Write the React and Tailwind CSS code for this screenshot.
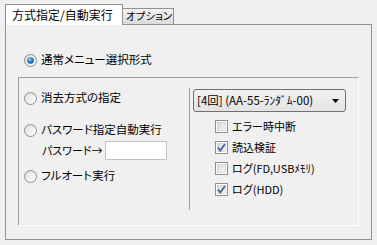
import React from 'react';

const font = "font-['Noto_Sans_CJK_JP','Noto_Sans',sans-serif] [font-feature-settings:'palt']";

const Radio = ({ checked }) => (
    <svg width="13" height="13" viewBox="0 0 13 13" className="shrink-0">
        <defs>
            <linearGradient id="rbg" x1="0" y1="0" x2="1" y2="1">
                <stop offset="0" stopColor="#dcdcdc" />
                <stop offset="1" stopColor="#ffffff" />
            </linearGradient>
            <radialGradient id="rdot" cx="0.4" cy="0.35" r="0.7">
                <stop offset="0" stopColor="#9fd8ff" />
                <stop offset="0.5" stopColor="#2a7fd0" />
                <stop offset="1" stopColor="#0d3f80" />
            </radialGradient>
        </defs>
        <circle cx="6.5" cy="6.5" r="6" fill="url(#rbg)" stroke="#8b8d90" />
        {checked && <circle cx="6.5" cy="6.5" r="3.3" fill="url(#rdot)" />}
    </svg>
);

const Check = ({ checked }) => (
    <svg width="13" height="13" viewBox="0 0 13 13" className="shrink-0">
        <defs>
            <linearGradient id="cbg" x1="0" y1="0" x2="1" y2="1">
                <stop offset="0" stopColor="#d8d8d8" />
                <stop offset="1" stopColor="#f8f8f8" />
            </linearGradient>
        </defs>
        <rect x="0.5" y="0.5" width="12" height="12" fill="#ffffff" stroke="#8e8f8f" />
        <rect x="2.5" y="2.5" width="8" height="8" fill="url(#cbg)" stroke="#c4c4c4" strokeWidth="0.6" />
        {checked && <path d="M3 6.5 L5.3 9.5 L10 3" fill="none" stroke="#4b5f98" strokeWidth="1.8" />}
    </svg>
);

const RadioRow = ({ checked, label, className = '' }) => (
    <div className={`flex items-center h-[16px] gap-[4px] ${className}`}>
        <Radio checked={checked} />
        <span className="text-[11.5px] leading-none text-black whitespace-nowrap">{label}</span>
    </div>
);

const CheckRow = ({ checked, label }) => (
    <div className="flex items-center h-[21px] gap-[4px]">
        <Check checked={checked} />
        <span className="text-[11px] leading-none text-black whitespace-nowrap">{label}</span>
    </div>
);

const App = () => {
    return (
        <div className={`w-[377px] h-[245px] bg-[#f0f0f0] pt-[4px] pl-[5px] ${font}`}>
            <div className="flex items-end h-[20px]">
                <div className="relative z-10 -mb-px w-[118px] h-[21px] bg-white border border-b-0 border-[#919191] pl-[6px] flex items-center text-[12px] leading-none text-black whitespace-nowrap">
                    方式指定/自動実行
                </div>
                <div className="w-[51px] h-[16px] border border-b-0 border-l-0 border-[#919191] bg-gradient-to-b from-[#f4f4f4] to-[#dadada] flex items-center pl-[3px] text-[10.5px] leading-none text-black whitespace-nowrap overflow-hidden">
                    オプション
                </div>
            </div>

            <div className="w-[367px] h-[216px] border border-[#919191] bg-[#f0f0f0]">
                <RadioRow checked label="通常メニュー選択形式" className="mt-[27px] ml-[18px]" />

                <div className="mt-[9px] ml-[12px] w-[341px] h-[149px] border border-t-[#a0a0a0] border-l-[#a0a0a0] border-b-white border-r-white flex">
                    <div className="w-[170px] pl-[5px] pt-[12px]">
                        <RadioRow label="消去方式の指定" />
                        <RadioRow label="パスワード指定自動実行" className="mt-[16px]" />
                        <div className="flex items-center mt-[3px] ml-[18px]">
                            <span className="w-[63px] text-[11px] leading-none text-black whitespace-nowrap">パスワード→</span>
                            <div className="w-[62px] h-[19px] bg-white border border-[#c3c3c3]" />
                        </div>
                        <RadioRow label="フルオート実行" className="mt-[8px]" />
                    </div>

                    <div className="mt-[10px] h-[122px] border-l border-[#a0a0a0] pl-[3px]">
                        <div className="mt-[1px] w-[153px] h-[23px] rounded-[3px] border border-[#707070] bg-gradient-to-b from-[#f2f2f2] to-[#e3e3e3] flex items-center justify-between pl-[3px] pr-[6px]">
                            <span className="text-[11.5px] leading-none text-black whitespace-nowrap">[4回] (AA-55-ﾗﾝﾀﾞﾑ-00)</span>
                            <svg width="7" height="4" viewBox="0 0 7 4">
                                <path d="M0 0 H7 L3.5 4 Z" fill="#000" />
                            </svg>
                        </div>
                        <div className="mt-[4px] ml-[22px]">
                            <CheckRow label="エラー時中断" />
                            <CheckRow checked label="読込検証" />
                            <CheckRow label="ログ(FD,USBﾒﾓﾘ)" />
                            <CheckRow checked label="ログ(HDD)" />
                        </div>
                    </div>
                </div>
            </div>
        </div>
    );
};
export default App;
